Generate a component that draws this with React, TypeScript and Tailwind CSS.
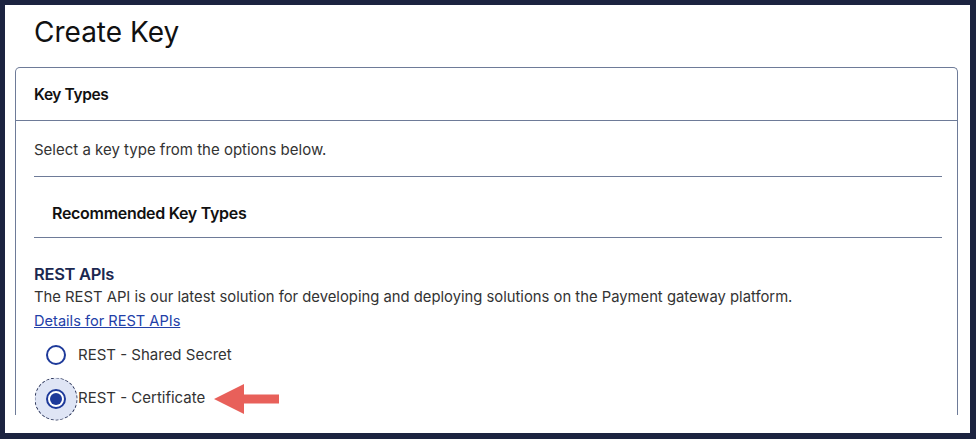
import React from 'react'

function Radio({ checked }: { checked?: boolean }) {
  return (
    <span className="relative flex h-[20px] w-[20px] shrink-0 items-center justify-center">
      {checked && (
        <span className="absolute left-1/2 top-1/2 h-[43px] w-[43px] -translate-x-1/2 -translate-y-1/2 rounded-full border border-dashed border-[#2a3458] bg-[#dfe5f5]" />
      )}
      <span className="relative flex h-[20px] w-[20px] items-center justify-center rounded-full border-2 border-[#1e3a9a] bg-white">
        {checked && <span className="h-[12px] w-[12px] rounded-full bg-[#1e3a9a]" />}
      </span>
    </span>
  )
}

function Arrow() {
  return (
    <svg width="66" height="32" viewBox="0 0 66 32">
      <polygon points="0,16 30,1 30,11.5 65,11.5 65,20.5 30,20.5 30,31" fill="#e8605a" />
    </svg>
  )
}

export default function App() {
  return (
    <div className="h-[439px] w-[976px] bg-[#1c2340] pb-[6px] pl-[5px] pr-[6px] pt-[5px] font-['Inter','Noto_Sans',sans-serif]">
      <div className="h-full overflow-hidden bg-white">
        <h1 className="flex h-[62px] items-center pb-[8px] pl-[29px] text-[28px] font-normal text-[#111]">Create Key</h1>

        <div className="ml-[10px] mr-[12px] rounded-t-[5px] border border-b-0 border-[#6e7b98]">
          <div className="flex h-[53px] items-center border-b border-[#6e7b98] pl-[18px] pt-[2px] text-[15.5px] font-semibold tracking-[-0.4px] text-[#111]">
            Key Types
          </div>

          <div className="pl-[18px] pr-[15px]">
            <p className="flex h-[55px] items-center pt-[3px] text-[15px] text-[#333]">Select a key type from the options below.</p>
            <div className="h-[62px] border-y border-[#6e7b98]">
              <div className="flex h-full items-center pl-[18px] pt-[11px] text-[16px] font-semibold tracking-[-0.3px] text-[#111]">
                Recommended Key Types
              </div>
            </div>

            <div className="pt-[24px]">
              <h2 className="text-[16.5px] font-semibold leading-[24px] tracking-[-0.3px] text-[#1b2850]">REST APIs</h2>
              <p className="text-[14.8px] leading-[22px] text-[#333]">
                The REST API is our latest solution for developing and deploying solutions on the Payment gateway platform.
              </p>
              <a href="#" className="text-[14.6px] leading-[22px] text-[#2340a8] underline">Details for REST APIs</a>

              <div className="mt-[12px] flex items-center gap-[12px] pl-[12px]">
                <Radio />
                <span className="text-[15px] text-[#333]">REST - Shared Secret</span>
              </div>
              <div className="mt-[16px] flex items-center gap-[12px] pl-[12px]">
                <Radio checked />
                <span className="flex items-center gap-[9px]">
                  <span className="text-[15px] text-[#333]">REST - Certificate</span>
                  <Arrow />
                </span>
              </div>
            </div>
          </div>
        </div>
      </div>
    </div>
  )
}
